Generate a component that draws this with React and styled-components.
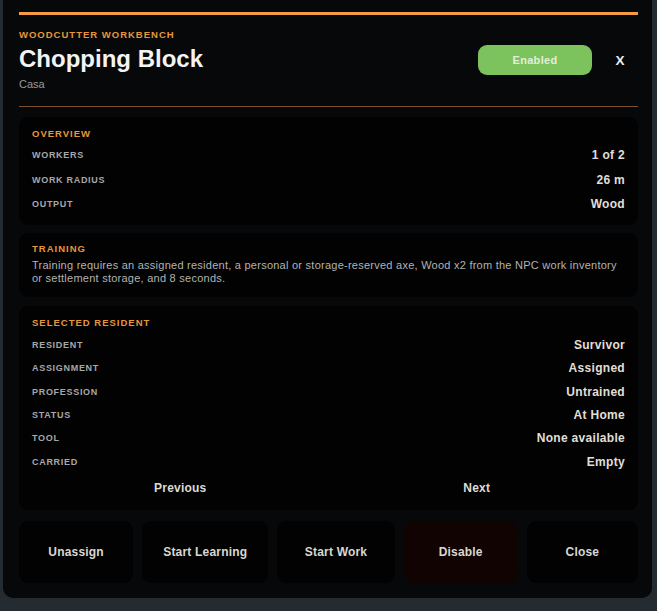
import React from 'react';
import styled, { createGlobalStyle } from 'styled-components';

const GlobalStyle = createGlobalStyle`
  html, body {
    margin: 0;
    padding: 0;
    background: #252c31;
  }
  body {
    font-family: "Liberation Sans", Arial, sans-serif;
    -webkit-font-smoothing: antialiased;
  }
  * {
    box-sizing: border-box;
  }
`;

const Modal = styled.div`
  margin-left: 3px;
  width: 649px;
  height: 598px;
  padding: 12px 14px 14px 16px;
  background: #070809;
  border-radius: 0 0 10px 10px;
  display: flex;
  flex-direction: column;
`;

const Header = styled.header`
  display: flex;
  border-top: 3px solid #f39c45;
  border-bottom: 1px solid #7d5029;
  padding: 14px 0 15px;
`;

const TitleBlock = styled.div`
  flex: 1;
  display: flex;
  flex-direction: column;
`;

const Eyebrow = styled.div`
  font-size: 9.5px;
  line-height: 12px;
  font-weight: 700;
  letter-spacing: 1px;
  text-transform: uppercase;
  color: #e8963a;
`;

const Title = styled.h1`
  margin: 4px 0 0;
  font-size: 24px;
  line-height: 28px;
  font-weight: 700;
  color: #f4f4f4;
`;

const Subtitle = styled.div`
  margin-top: 4px;
  font-size: 11px;
  line-height: 14px;
  color: #9a9a9a;
`;

const HeaderActions = styled.div`
  display: flex;
  align-items: center;
  align-self: flex-start;
  gap: 16px;
  padding: 16px 6px 0 0;
`;

const StatusPill = styled.button`
  width: 114px;
  height: 30px;
  border: none;
  border-radius: 9px;
  background: #7cc25d;
  color: #e2efda;
  font-family: inherit;
  font-size: 11px;
  font-weight: 700;
  letter-spacing: 0.3px;
`;

const CloseX = styled.button`
  width: 24px;
  height: 24px;
  padding: 0;
  border: none;
  background: transparent;
  color: #ececec;
  font-family: inherit;
  font-size: 13.5px;
  font-weight: 700;
`;

const Card = styled.section`
  margin-top: ${(p) => p.$gap}px;
  padding: ${(p) => p.$pad};
  background: #020202;
  border-radius: 9px;
  display: flex;
  flex-direction: column;
`;

const Rows = styled.div`
  margin-top: ${(p) => p.$offset}px;
  display: flex;
  flex-direction: column;
`;

const Row = styled.div`
  display: flex;
  align-items: center;
  justify-content: space-between;
  height: ${(p) => p.$h}px;
`;

const Label = styled.span`
  font-size: 9px;
  font-weight: 700;
  letter-spacing: 0.7px;
  text-transform: uppercase;
  color: #a8a8a8;
`;

const Value = styled.span`
  font-size: 12px;
  font-weight: 700;
  letter-spacing: 0.3px;
  color: #e0dfd8;
`;

const Paragraph = styled.p`
  margin: 4px 0 0;
  font-size: 11px;
  line-height: 13px;
  letter-spacing: 0.25px;
  color: #b3b3b3;
`;

const NavRow = styled.div`
  display: flex;
  height: 28px;
`;

const NavButton = styled.button`
  flex: 1;
  border: none;
  background: transparent;
  color: #dcdbd4;
  font-family: inherit;
  font-size: 12px;
  font-weight: 700;
  letter-spacing: 0.2px;
`;

const ActionBar = styled.div`
  margin-top: 11px;
  display: grid;
  grid-template-columns: 114fr 126fr 117fr 114fr 111fr;
  gap: 9px;
`;

const ActionButton = styled.button`
  height: 62px;
  border: none;
  border-radius: 9px;
  background: ${(p) => (p.$danger ? '#120303' : '#020202')};
  color: #d9d8d0;
  font-family: inherit;
  font-size: 12px;
  font-weight: 700;
  letter-spacing: 0.2px;
`;

const overview = [
  ['Workers', '1 of 2'],
  ['Work radius', '26 m'],
  ['Output', 'Wood'],
];

const resident = [
  ['Resident', 'Survivor'],
  ['Assignment', 'Assigned'],
  ['Profession', 'Untrained'],
  ['Status', 'At Home'],
  ['Tool', 'None available'],
  ['Carried', 'Empty'],
];

const actions = ['Unassign', 'Start Learning', 'Start Work', 'Disable', 'Close'];

const InfoRows = ({ items, height, offset }) => (
  <Rows $offset={offset}>
    {items.map(([label, value]) => (
      <Row key={label} $h={height}>
        <Label>{label}</Label>
        <Value>{value}</Value>
      </Row>
    ))}
  </Rows>
);

const App = () => (
  <>
    <GlobalStyle />
    <Modal>
      <Header>
        <TitleBlock>
          <Eyebrow>Woodcutter Workbench</Eyebrow>
          <Title>Chopping Block</Title>
          <Subtitle>Casa</Subtitle>
        </TitleBlock>
        <HeaderActions>
          <StatusPill>Enabled</StatusPill>
          <CloseX>X</CloseX>
        </HeaderActions>
      </Header>

      <Card $gap={10} $pad="11px 13px 9px">
        <Eyebrow>Overview</Eyebrow>
        <InfoRows items={overview} height={24.4} offset={3} />
      </Card>

      <Card $gap={8} $pad="10px 13px 12px">
        <Eyebrow>Training</Eyebrow>
        <Paragraph>
          Training requires an assigned resident, a personal or storage-reserved axe, Wood x2 from the NPC work inventory or settlement storage, and 8 seconds.
        </Paragraph>
      </Card>

      <Card $gap={9} $pad="11px 13px 8px">
        <Eyebrow>Selected Resident</Eyebrow>
        <InfoRows items={resident} height={23.4} offset={4} />
        <NavRow>
          <NavButton>Previous</NavButton>
          <NavButton>Next</NavButton>
        </NavRow>
      </Card>

      <ActionBar>
        {actions.map((name) => (
          <ActionButton key={name} $danger={name === 'Disable'}>
            {name}
          </ActionButton>
        ))}
      </ActionBar>
    </Modal>
  </>
);

export default App;
